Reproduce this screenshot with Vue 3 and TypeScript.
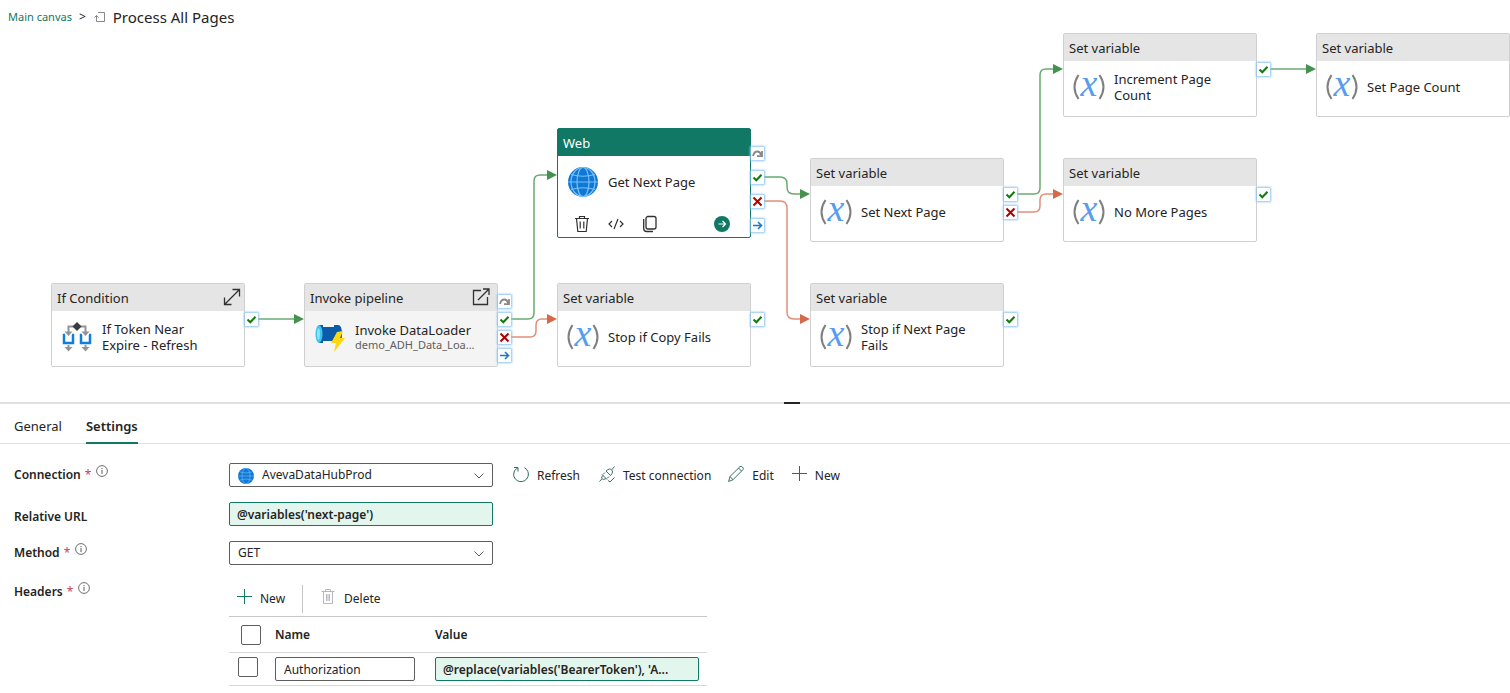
<script setup lang="ts">
import { ref } from 'vue'

type PortKind = 'skip' | 'success' | 'fail' | 'done'
type IconKind = 'variable' | 'condition' | 'pipeline' | 'web'

interface Port {
  kind: PortKind
  y: number
}

interface Activity {
  id: string
  type: string
  name: string
  detail?: string
  icon: IconKind
  x: number
  y: number
  selected?: boolean
  corner?: 'expand' | 'open'
  ports: Port[]
}

interface Link {
  kind: 'success' | 'fail'
  path: string
  x: number
  y: number
}

const activities: Activity[] = [
  {
    id: 'if', type: 'If Condition', name: 'If Token Near Expire - Refresh', icon: 'condition',
    x: 51, y: 283, corner: 'expand', ports: [{ kind: 'success', y: 36 }],
  },
  {
    id: 'invoke', type: 'Invoke pipeline', name: 'Invoke DataLoader', detail: 'demo_ADH_Data_Loa...', icon: 'pipeline',
    x: 304, y: 283, corner: 'open',
    ports: [{ kind: 'skip', y: 18 }, { kind: 'success', y: 36 }, { kind: 'fail', y: 54 }, { kind: 'done', y: 72 }],
  },
  {
    id: 'web', type: 'Web', name: 'Get Next Page', icon: 'web', x: 557, y: 128, selected: true,
    ports: [{ kind: 'skip', y: 25 }, { kind: 'success', y: 49 }, { kind: 'fail', y: 73 }, { kind: 'done', y: 97 }],
  },
  {
    id: 'stop-copy', type: 'Set variable', name: 'Stop if Copy Fails', icon: 'variable',
    x: 557, y: 283, ports: [{ kind: 'success', y: 36 }],
  },
  {
    id: 'set-next', type: 'Set variable', name: 'Set Next Page', icon: 'variable',
    x: 810, y: 158, ports: [{ kind: 'success', y: 36 }, { kind: 'fail', y: 54 }],
  },
  {
    id: 'stop-next', type: 'Set variable', name: 'Stop if Next Page Fails', icon: 'variable',
    x: 810, y: 283, ports: [{ kind: 'success', y: 36 }],
  },
  {
    id: 'increment', type: 'Set variable', name: 'Increment Page Count', icon: 'variable',
    x: 1063, y: 33, ports: [{ kind: 'success', y: 36 }],
  },
  {
    id: 'no-more', type: 'Set variable', name: 'No More Pages', icon: 'variable',
    x: 1063, y: 158, ports: [{ kind: 'success', y: 36 }],
  },
  {
    id: 'set-count', type: 'Set variable', name: 'Set Page Count', icon: 'variable',
    x: 1316, y: 33, ports: [],
  },
]

const links: Link[] = [
  { kind: 'success', path: 'M258 319H296', x: 304, y: 319 },
  { kind: 'success', path: 'M511 319H528Q534 319 534 313V181Q534 175 540 175H549', x: 557, y: 175 },
  { kind: 'fail', path: 'M511 337H530Q536 337 536 331V325Q536 319 542 319H549', x: 557, y: 319 },
  { kind: 'success', path: 'M764 177H780Q787 177 787 184V187Q787 194 794 194H802', x: 810, y: 194 },
  { kind: 'fail', path: 'M764 201H780Q787 201 787 208V312Q787 319 794 319H802', x: 810, y: 319 },
  { kind: 'success', path: 'M1017 194H1034Q1040 194 1040 188V75Q1040 69 1046 69H1055', x: 1063, y: 69 },
  { kind: 'fail', path: 'M1017 212H1034Q1040 212 1040 206V200Q1040 194 1046 194H1055', x: 1063, y: 194 },
  { kind: 'success', path: 'M1270 69H1308', x: 1316, y: 69 },
]

const connection = ref('AvevaDataHubProd')
const relativeUrl = ref("@variables('next-page')")
const method = ref('GET')
const allChecked = ref(false)
const headers = ref([
  { checked: false, name: 'Authorization', value: "@replace(variables('BearerToken'), 'A..." },
])
</script>

<template>
  <main class="page">
    <section class="canvas" aria-label="Pipeline canvas">
      <nav class="crumbs" aria-label="Breadcrumb">
        <a href="#">Main canvas</a>
        <span class="crumb-sep">&gt;</span>
        <svg class="crumb-icon" width="12" height="12" viewBox="0 0 12 12" fill="none" stroke="#8a8886" stroke-width="1">
          <path d="M4 1.500H10.500V10.500H2.500V5M0.500 6.500L2.500 4.500L4.500 6.500" />
        </svg>
        <h1>Process All Pages</h1>
      </nav>

      <svg class="links" width="100%" height="100%">
        <g v-for="(link, i) in links" :key="i" :class="link.kind">
          <path :d="link.path" class="wire" />
          <path :d="`M${link.x} ${link.y}l-10 -5v10z`" class="head" />
        </g>
      </svg>

      <article
        v-for="a in activities"
        :key="a.id"
        class="node"
        :class="[a.icon, { selected: a.selected }]"
        :style="{ left: a.x + 'px', top: a.y + 'px' }"
      >
        <header class="node-head">
          <span>{{ a.type }}</span>
          <button v-if="a.corner" class="bare" :aria-label="a.corner">
            <svg v-if="a.corner === 'expand'" width="18" height="20" viewBox="0 0 18 20" fill="none" stroke="#323130" stroke-width="1.300">
              <path d="M1.500 16.500L16.500 1.500M9.500 1.500H16.500V8.500M1.500 9.500V16.500H8.500" />
            </svg>
            <svg v-else width="22" height="20" viewBox="0 0 22 20" fill="none" stroke="#323130" stroke-width="1.300">
              <path d="M9 2.500H1.500V16.500H15.500V9M6 12L17 1M11 1H17V7" />
            </svg>
          </button>
        </header>
        <div class="node-body">
          <svg v-if="a.icon === 'variable'" class="node-icon" width="32" height="28" viewBox="0 0 32 28">
            <path d="M5.500 2Q-2.500 14 5.500 26M26.500 2Q34.500 14 26.500 26" fill="none" stroke="#7f7f7f" stroke-width="2" />
            <text x="16" y="23" text-anchor="middle" class="glyph-x">x</text>
          </svg>
          <svg v-else-if="a.icon === 'condition'" class="node-icon" width="32" height="32" viewBox="0 0 32 32" fill="none">
            <path d="M7.500 13V5.500H24.500V13M7.500 24V29M24.500 24V29" stroke="#949494" stroke-width="2" />
            <path d="M3.500 10.500H11.500L7.500 15zM20.500 10.500H28.500L24.500 15zM3.500 26H11.500L7.500 30.500zM20.500 26H28.500L24.500 30.500z" fill="#949494" />
            <path d="M16 1L20.500 5.500L16 10L11.500 5.500z" fill="#3b3b3b" />
            <path d="M4 14H3V22H12V14H11M21 14H20V22H29V14H28" stroke="#0f7fdb" stroke-width="2.500" />
          </svg>
          <svg v-else-if="a.icon === 'pipeline'" class="node-icon" width="32" height="30" viewBox="0 0 32 30">
            <path d="M5 3H9V5H20V3H24Q28 3 28 12T24 21H20V19H9V21H5z" fill="#0b5ba8" />
            <ellipse cx="5" cy="12" rx="3.500" ry="9" fill="#3fc4f0" />
            <ellipse cx="4.500" cy="12" rx="1.500" ry="6" fill="#8be4fb" />
            <path d="M23 10L29 9L26 16L31 16L20 30L22 21H17z" fill="#ffd810" />
          </svg>
          <svg v-else class="node-icon" width="32" height="30" viewBox="0 0 32 30" fill="none">
            <circle cx="16" cy="15" r="15" fill="#0f78d4" />
            <g stroke="#7cc0f7" stroke-width="1.200">
              <ellipse cx="16" cy="15" rx="6" ry="14.500" />
              <ellipse cx="16" cy="15" rx="12" ry="14.500" />
              <path d="M1 15H31M4 7.500Q16 11 28 7.500M4 22.500Q16 19 28 22.500" />
            </g>
          </svg>
          <div class="node-text">
            <span class="node-name">{{ a.name }}</span>
            <span v-if="a.detail" class="node-detail">{{ a.detail }}</span>
          </div>
        </div>
        <footer v-if="a.selected" class="node-actions">
          <button class="bare" aria-label="Delete activity">
            <svg width="16" height="18" viewBox="0 0 16 18" fill="none" stroke="#323130" stroke-width="1.200">
              <path d="M1 3.500H15M5.500 3.500V1.500H10.500V3.500M2.500 3.500L3.800 16.500H12.200L13.500 3.500M6.200 6.500V13.500M9.800 6.500V13.500" />
            </svg>
          </button>
          <button class="bare" aria-label="View code">
            <svg width="16" height="18" viewBox="0 0 16 18" fill="none" stroke="#323130" stroke-width="1.200">
              <path d="M4 6L1 9L4 12M12 6L15 9L12 12M10 4L6 14" />
            </svg>
          </button>
          <button class="bare" aria-label="Copy activity">
            <svg width="16" height="18" viewBox="0 0 16 18" fill="none" stroke="#323130" stroke-width="1.300">
              <rect x="4" y="1.500" width="10" height="12.500" rx="2" />
              <path d="M1.700 4V13.500Q1.700 16.500 4.700 16.500H11" />
            </svg>
          </button>
          <button class="bare go" aria-label="Add next activity">
            <svg width="16" height="16" viewBox="0 0 16 16" fill="none">
              <circle cx="8" cy="8" r="8" fill="#117865" />
              <path d="M4.500 8H11.500M8.500 5L11.500 8L8.500 11" stroke="#fff" stroke-width="1.200" />
            </svg>
          </button>
        </footer>
        <span v-for="p in a.ports" :key="p.kind" class="port" :style="{ top: p.y + 'px' }">
          <svg width="11" height="11" viewBox="0 0 11 11" fill="none">
            <path v-if="p.kind === 'success'" d="M1.500 5.500L4.300 8.300L9.500 2.700" stroke="#107c10" stroke-width="2" />
            <path v-else-if="p.kind === 'fail'" d="M1.500 1.500L9.500 9.500M9.500 1.500L1.500 9.500" stroke="#b00000" stroke-width="2" />
            <path v-else-if="p.kind === 'done'" d="M1 5.500H9.500M6 2L9.500 5.500L6 9" stroke="#1a78cf" stroke-width="1.600" />
            <path v-else d="M1 8Q2 3.500 5.500 3.500Q8 3.500 9 7M10 3V8.200H5" stroke="#8a8886" stroke-width="1.800" />
          </svg>
        </span>
      </article>
    </section>

    <div class="splitter" role="separator"><span></span></div>

    <section class="panel">
      <div class="tabs" role="tablist">
        <button role="tab" aria-selected="false">General</button>
        <button role="tab" aria-selected="true" class="active">Settings</button>
      </div>

      <form class="form" @submit.prevent>
        <div class="row">
          <div class="label">
            <label for="connection">Connection</label><span class="req">*</span>
            <svg class="info" width="12" height="12" viewBox="0 0 12 12" fill="none" stroke="#605e5c">
              <circle cx="6" cy="6" r="5.400" stroke-width="0.900" /><path d="M6 5V9M6 3V4.200" />
            </svg>
          </div>
          <div class="select">
            <svg class="select-icon" width="16" height="16" viewBox="0 0 16 16" fill="none">
              <circle cx="8" cy="8" r="8" fill="#0f78d4" />
              <path d="M0 8H16M2 4Q8 6 14 4M2 12Q8 10 14 12" stroke="#5eb0f5" stroke-width="0.800" />
              <ellipse cx="8" cy="8" rx="4" ry="7.700" stroke="#5eb0f5" stroke-width="0.800" />
            </svg>
            <select id="connection" v-model="connection" class="with-icon">
              <option>AvevaDataHubProd</option>
            </select>
            <svg class="chevron" width="10" height="6" viewBox="0 0 10 6" fill="none" stroke="#605e5c">
              <path d="M0.500 0.500L5 5L9.500 0.500" />
            </svg>
          </div>
          <div class="commands">
            <button type="button" class="cmd">
              <svg width="16" height="18" viewBox="0 0 16 18" fill="none" stroke="#2d6a62">
                <path d="M4.500 3Q0.600 5 0.600 9.200A7.400 7.400 0 1 0 11.500 2.700M1 2.500H5V6.500" />
              </svg>
              <span>Refresh</span>
            </button>
            <button type="button" class="cmd test">
              <svg width="16" height="18" viewBox="0 0 16 18" fill="none" stroke="#3d6f69">
                <path d="M7 6L11.500 10.500Q13.500 8.500 13.500 7Q13.500 5.800 12.600 4.900Q11.500 3.900 10.500 4Q9 4.200 7 6zM12.600 4.900L15.500 1.500M3 9.500L8 14.500M4 10.500Q2 12 2.800 13.500Q4.500 15.500 7 13.500M2.800 14L0.500 16.500M4 9.500L6 7.500M8 13.500L10 11.500M9 15.500L11 17L15.500 12.500" />
              </svg>
              <span>Test connection</span>
            </button>
            <button type="button" class="cmd">
              <svg width="16" height="18" viewBox="0 0 16 18" fill="none" stroke="#3d6f69">
                <path d="M0.600 16.500L2 11.500L12 1.600Q13 0.800 14.500 2Q16 3.500 15 4.600L5 14.700zM2 11.500L5 14.700M10.500 3L13.500 6" />
              </svg>
              <span>Edit</span>
            </button>
            <button type="button" class="cmd">
              <svg width="16" height="18" viewBox="0 0 16 18" fill="none" stroke="#117865">
                <path d="M8.500 1V16M1 8.500H16" />
              </svg>
              <span>New</span>
            </button>
          </div>
        </div>

        <div class="row">
          <div class="label low"><label for="relative-url">Relative URL</label></div>
          <input id="relative-url" v-model="relativeUrl" class="field expression" type="text" />
        </div>

        <div class="row">
          <div class="label">
            <label for="method">Method</label><span class="req">*</span>
            <svg class="info" width="12" height="12" viewBox="0 0 12 12" fill="none" stroke="#605e5c">
              <circle cx="6" cy="6" r="5.400" stroke-width="0.900" /><path d="M6 5V9M6 3V4.200" />
            </svg>
          </div>
          <div class="select">
            <select id="method" v-model="method">
              <option>GET</option>
            </select>
            <svg class="chevron" width="10" height="6" viewBox="0 0 10 6" fill="none" stroke="#605e5c">
              <path d="M0.500 0.500L5 5L9.500 0.500" />
            </svg>
          </div>
        </div>

        <div class="row">
          <div class="label">
            <span id="headers-label">Headers</span><span class="req">*</span>
            <svg class="info" width="12" height="12" viewBox="0 0 12 12" fill="none" stroke="#605e5c">
              <circle cx="6" cy="6" r="5.400" stroke-width="0.900" /><path d="M6 5V9M6 3V4.200" />
            </svg>
          </div>
          <div class="grid">
            <div class="grid-bar">
              <button type="button" class="cmd">
                <svg width="16" height="18" viewBox="0 0 16 18" fill="none" stroke="#117865">
                  <path d="M8.500 1V16M1 8.500H16" />
                </svg>
                <span>New</span>
              </button>
              <button type="button" class="cmd delete">
                <svg width="16" height="18" viewBox="0 0 16 18" fill="none" stroke="#b8b6c0">
                  <path d="M1.500 3.500H14.500M5.500 3.500V1.500H10.500V3.500M3.500 3.500V15.500H12.500V3.500M6.500 6V13M8 6V13M9.500 6V13" />
                </svg>
                <span>Delete</span>
              </button>
            </div>
            <table aria-labelledby="headers-label">
              <thead>
                <tr>
                  <th class="pick"><input v-model="allChecked" type="checkbox" aria-label="Select all headers" /></th>
                  <th class="name">Name</th>
                  <th>Value</th>
                </tr>
              </thead>
              <tbody>
                <tr v-for="(h, i) in headers" :key="i">
                  <td class="pick"><input v-model="h.checked" type="checkbox" aria-label="Select header" /></td>
                  <td class="name"><input v-model="h.name" class="field" type="text" aria-label="Name" /></td>
                  <td><input v-model="h.value" class="field expression" type="text" aria-label="Value" /></td>
                </tr>
              </tbody>
            </table>
          </div>
        </div>
      </form>
    </section>
  </main>
</template>

<style>
body {
  background: #fff;
  overflow: hidden;
}
</style>

<style scoped>
.page {
  min-height: 100vh;
  display: flex;
  flex-direction: column;
  overflow: hidden;
  font-family: "Segoe UI", "Noto Sans", "Open Sans", sans-serif;
  font-size: 13px;
  line-height: 16px;
  color: #242424;
}
.page *,
.page {
  box-sizing: border-box;
}
button,
input,
select {
  font: inherit;
  color: inherit;
}
button {
  border: 0;
  background: none;
  padding: 0;
  cursor: pointer;
}
svg {
  display: block;
  flex: none;
}

/* Canvas */
.canvas {
  position: relative;
  height: 402px;
  overflow: hidden;
}
.crumbs {
  display: flex;
  align-items: center;
  height: 34px;
  padding-left: 8px;
}
.crumbs a {
  font-size: 11px;
  color: #117865;
  text-decoration: none;
}
.crumb-sep {
  margin: 0 8px 0 7px;
  font-size: 12px;
}
.crumb-icon {
  margin-right: 7px;
}
.crumbs h1 {
  margin: 0;
  font-size: 15px;
  line-height: 20px;
  font-weight: 400;
}
.links {
  position: absolute;
  inset: 0;
}
.wire {
  fill: none;
  stroke-width: 1.5;
}
.success .wire {
  stroke: #6aaa70;
}
.success .head {
  fill: #459150;
}
.fail .wire {
  stroke: #e08f7b;
}
.fail .head {
  fill: #d5694a;
}
.node {
  position: absolute;
  width: 194px;
  min-height: 84px;
  background: #fff;
  border: 1px solid #d0d0d0;
  border-radius: 2px;
}
.node.pipeline {
  background: #f4f4f4;
}
.node-head {
  display: flex;
  align-items: center;
  justify-content: space-between;
  height: 27px;
  padding: 0 3px 0 5px;
  background: #e5e5e5;
}
.node-body {
  display: flex;
  align-items: center;
  gap: 9px;
  height: 52px;
  padding: 0 9px;
}
.node-icon {
  overflow: visible;
}
.node-text {
  display: flex;
  flex-direction: column;
  width: 120px;
}
.node-detail {
  font-size: 11px;
  line-height: 14px;
  color: #605e5c;
}
.condition .node-text {
  width: 108px;
}
.pipeline .node-name {
  white-space: nowrap;
}
.glyph-x {
  font-family: "Liberation Serif", serif;
  font-style: italic;
  font-size: 38px;
  fill: #569cf0;
}
.node.selected {
  border-color: #117865;
}
.selected .node-head {
  background: #117865;
  color: #fff;
}
.node-actions {
  display: flex;
  align-items: center;
  gap: 18px;
  height: 29px;
  padding: 2px 20px 0 16px;
}
.go {
  margin-left: auto;
}
.port {
  position: absolute;
  left: 194px;
  width: 13px;
  height: 13px;
  margin: -7px 0 0 -1px;
  padding: 1px;
  background: #fff;
  box-shadow: 0 0 2px 1px #8cc4f2;
}

/* Splitter */
.splitter {
  display: flex;
  justify-content: center;
  height: 2px;
  padding-left: 74px;
  background: #e0e0e0;
}
.splitter span {
  width: 16px;
  background: #242424;
}

/* Property panel */
.panel {
  font-size: 12px;
}
.tabs {
  display: flex;
  gap: 24px;
  height: 40px;
  padding: 4px 14px 0;
  border-bottom: 1px solid #e0e0e0;
  font-size: 13px;
}
.tabs button {
  height: 36px;
  padding-top: 2px;
  border-bottom: 2px solid transparent;
}
.tabs .active {
  font-weight: 600;
  border-color: #117865;
}
.form {
  display: flex;
  flex-direction: column;
  gap: 15px;
  padding: 19px 14px 0;
}
.row {
  display: flex;
  align-items: flex-start;
  height: 24px;
}
.row:last-child {
  height: auto;
}
.label {
  display: flex;
  align-items: center;
  width: 215px;
  height: 24px;
  font-weight: 600;
}
.label.low {
  height: 30px;
}
.req {
  margin: 0 5px 0 4px;
  font-weight: 400;
  color: #c4455a;
}
.info {
  margin-bottom: 8px;
}
.select {
  position: relative;
  width: 264px;
}
.select select {
  display: block;
  appearance: none;
  width: 100%;
  height: 24px;
  padding: 0 24px 0 8px;
  border: 1px solid #605e5c;
  border-radius: 2px;
  background: #fff;
}
.select .with-icon {
  padding-left: 32px;
}
.select-icon {
  position: absolute;
  left: 9px;
  top: 5px;
}
.chevron {
  position: absolute;
  right: 9px;
  top: 10px;
  pointer-events: none;
}
.field {
  display: block;
  width: 264px;
  height: 24px;
  padding: 0 8px;
  border: 1px solid #605e5c;
  border-radius: 2px;
  background: #fff;
}
.expression {
  padding: 0 7px;
  border-color: #117865;
  background: #e3f6ed;
  font-weight: 600;
}
.commands {
  display: flex;
  gap: 17px;
  height: 26px;
  margin-left: 20px;
}
.cmd {
  display: flex;
  align-items: center;
  gap: 8px;
}
.cmd svg {
  margin-bottom: 4px;
}
.test {
  margin-left: 2px;
}
.grid {
  width: 478px;
}
.grid-bar {
  display: flex;
  align-items: center;
  height: 37px;
  padding: 2px 7px 0;
  border-bottom: 1px solid #c8c8c8;
}
.delete {
  height: 28px;
  margin-left: 17px;
  padding-left: 17px;
  border-left: 1px solid #c8c6c4;
}
table {
  width: 100%;
  border-spacing: 0;
  table-layout: fixed;
}
th,
td {
  padding: 0;
  text-align: left;
  border-bottom: 1px solid #d8d8d8;
}
th {
  height: 36px;
  font-weight: 600;
}
td {
  height: 33px;
}
.pick {
  width: 46px;
  padding-left: 9px;
}
th.pick {
  padding-left: 12px;
}
td.pick {
  padding-bottom: 4px;
}
.name {
  width: 160px;
}
.name .field {
  width: 140px;
}
input[type="checkbox"] {
  display: block;
  appearance: none;
  width: 20px;
  height: 20px;
  margin: 0;
  border: 1px solid #605e5c;
  border-radius: 2px;
  background: #fff;
}
input[type="checkbox"]:checked {
  background: #117865;
}
</style>
